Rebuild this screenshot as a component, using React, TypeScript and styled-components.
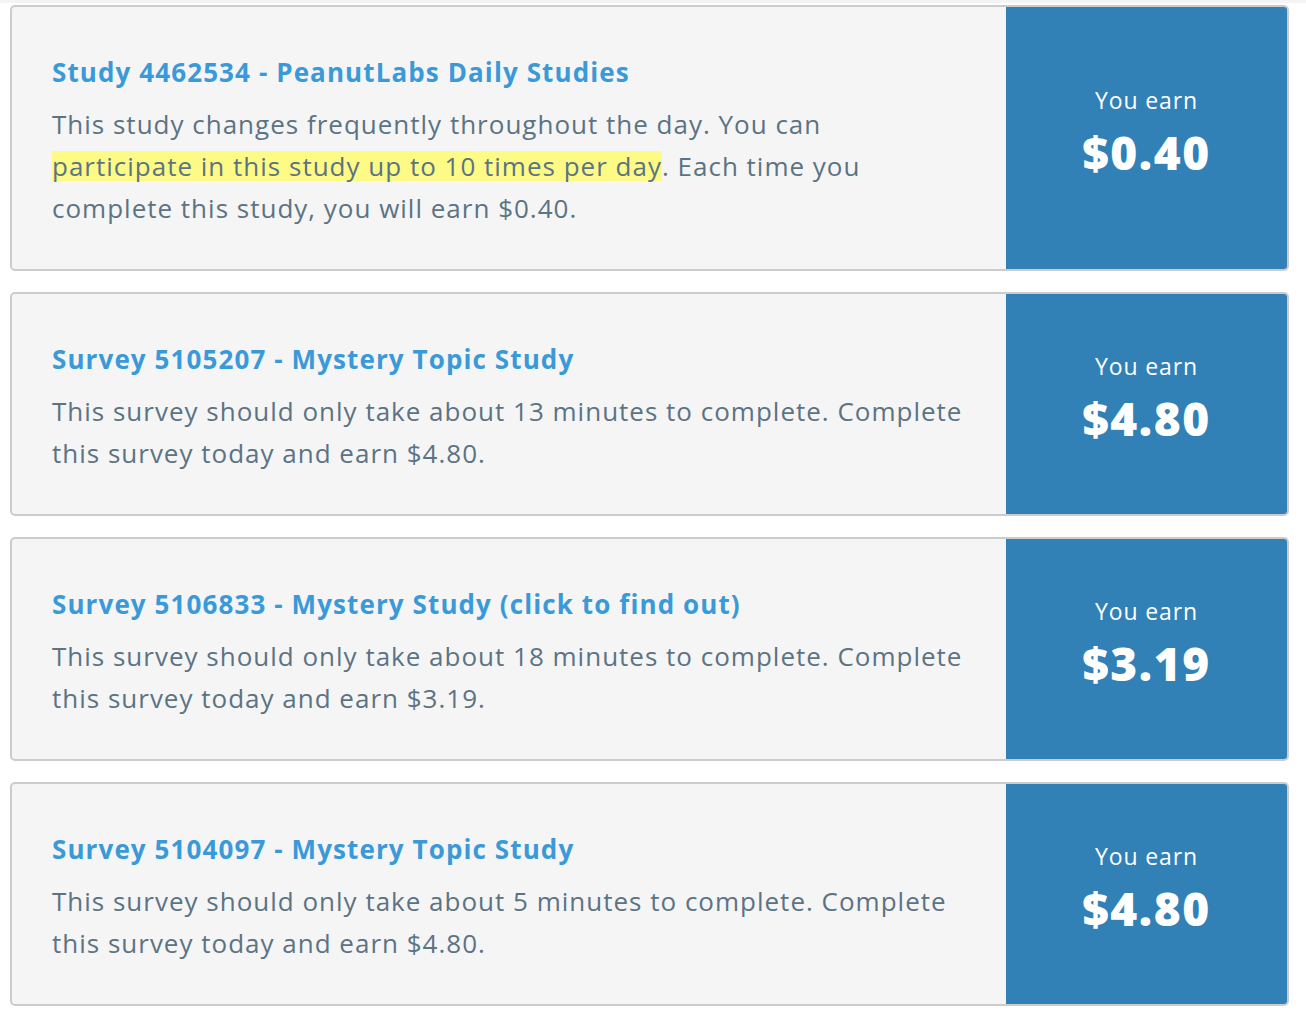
import React from "react";
import styled, { createGlobalStyle } from "styled-components";

const GlobalStyle = createGlobalStyle`
  html, body {
    margin: 0;
    padding: 0;
    background: #ffffff;
  }
  body {
    font-family: "Open Sans", "Lato", sans-serif;
    -webkit-font-smoothing: antialiased;
  }
`;

const TopStrip = styled.div`
  height: 3px;
  background: #f4f4f4;
`;

const List = styled.div`
  display: flex;
  flex-direction: column;
  gap: 21px;
  padding: 2px 17px 0 10px;
`;

const Card = styled.div`
  display: flex;
  background: #f5f5f5;
  border: 2px solid #cccccc;
  border-radius: 5px;
  overflow: hidden;
`;

const Body = styled.div`
  flex: 1;
  padding: 49px 40px 40px 40px;
`;

const Title = styled.a`
  display: block;
  font-family: "Open Sans", sans-serif;
  font-weight: 700;
  font-size: 26px;
  line-height: 32px;
  letter-spacing: 1.1px;
  color: #3a9ad9;
  text-decoration: none;
  margin-bottom: 15px;
`;

const Text = styled.p`
  margin: 0;
  font-size: 26px;
  line-height: 42px;
  letter-spacing: 1px;
  color: #5b7383;
`;

const Mark = styled.span`
  background: linear-gradient(
    to bottom,
    transparent 3px,
    #fdfb86 3px,
    #fdfb86 calc(100% - 3px),
    transparent calc(100% - 3px)
  );
`;

const Earn = styled.div`
  width: 281px;
  flex: none;
  background: #3181b7;
  color: #ffffff;
  display: flex;
  flex-direction: column;
  align-items: center;
  justify-content: center;
  padding-bottom: 9px;
`;

const EarnLabel = styled.div`
  font-size: 23px;
  line-height: 28px;
  letter-spacing: 0.9px;
`;

const Amount = styled.div`
  font-weight: 800;
  font-size: 46px;
  line-height: 60px;
  letter-spacing: 1.6px;
  margin-top: 8px;
`;

type Study = {
  title: string;
  text: React.ReactNode;
  amount: string;
};

const studies: Study[] = [
  {
    title: "Study 4462534 - PeanutLabs Daily Studies",
    text: (
      <>
        This study changes frequently throughout the day. You can{" "}
        <Mark>participate in this study up to 10 times per day</Mark>. Each
        time you complete this study, you will earn $0.40.
      </>
    ),
    amount: "$0.40",
  },
  {
    title: "Survey 5105207 - Mystery Topic Study",
    text: "This survey should only take about 13 minutes to complete. Complete this survey today and earn $4.80.",
    amount: "$4.80",
  },
  {
    title: "Survey 5106833 - Mystery Study (click to find out)",
    text: "This survey should only take about 18 minutes to complete. Complete this survey today and earn $3.19.",
    amount: "$3.19",
  },
  {
    title: "Survey 5104097 - Mystery Topic Study",
    text: "This survey should only take about 5 minutes to complete. Complete this survey today and earn $4.80.",
    amount: "$4.80",
  },
];

export default function App() {
  return (
    <>
      <GlobalStyle />
      <TopStrip />
      <List>
        {studies.map((s) => (
          <Card key={s.title}>
            <Body>
              <Title href="#">{s.title}</Title>
              <Text>{s.text}</Text>
            </Body>
            <Earn>
              <EarnLabel>You earn</EarnLabel>
              <Amount>{s.amount}</Amount>
            </Earn>
          </Card>
        ))}
      </List>
    </>
  );
}
